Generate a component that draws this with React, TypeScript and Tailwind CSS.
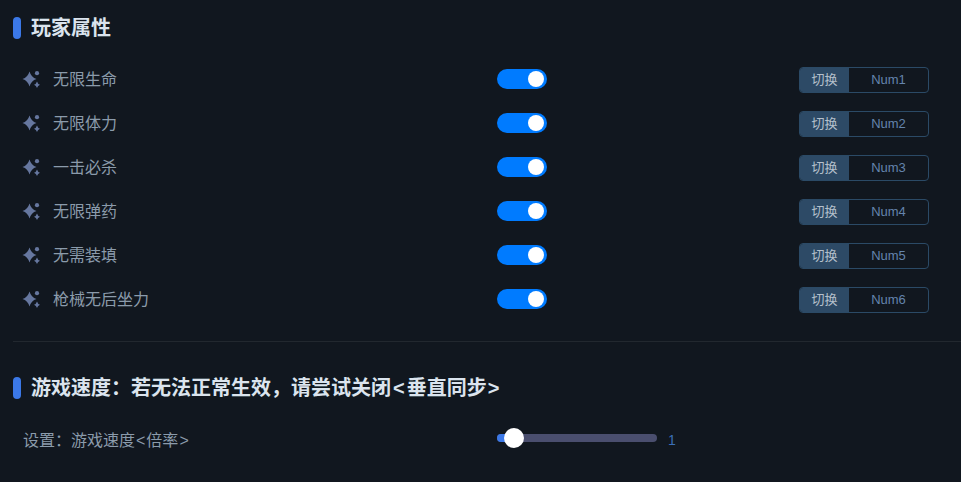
import React from 'react';

const rows = [
  { name: '无限生命', key: 'Num1' },
  { name: '无限体力', key: 'Num2' },
  { name: '一击必杀', key: 'Num3' },
  { name: '无限弹药', key: 'Num4' },
  { name: '无需装填', key: 'Num5' },
  { name: '枪械无后坐力', key: 'Num6' },
];

const Sparkle = () => (
  <svg width="18" height="18" viewBox="0 0 18 18" className="shrink-0" fill="#66779f">
    <path d="M7.5 1.5 Q9.2 7.3 14.5 9 Q9.2 10.7 7.5 16.5 Q5.8 10.7 0.5 9 Q5.8 7.3 7.5 1.5 Z" />
    <circle cx="15" cy="3.2" r="2.1" />
    <path d="M15 11.5 Q15.7 14 18 14.7 Q15.7 15.4 15 18 Q14.3 15.4 12 14.7 Q14.3 14 15 11.5 Z" />
  </svg>
);

const Heading = ({ children }: { children: React.ReactNode }) => (
  <div className="flex items-center h-[22px] pl-[13px]">
    <span className="w-2 h-[22px] rounded bg-[#3b78e7]" />
    <h2 className="ml-[10px] text-[20px] leading-[22px] font-bold text-[#dbe4ee]">{children}</h2>
  </div>
);

const Row = ({ name, hotkey }: { name: string; hotkey: string }) => (
  <div className="flex items-center h-11">
    <div className="w-[497px] flex items-center pl-[22px]">
      <Sparkle />
      <span className="ml-[13px] mt-[2px] text-base text-[#8b9bab]">{name}</span>
    </div>
    <div className="w-[50px] h-5 rounded-full bg-[#007bff] flex items-center justify-end pr-[3px]">
      <span className="w-4 h-4 rounded-full bg-white" />
    </div>
    <div className="ml-[252px] mt-px w-[130px] h-[26px] flex rounded border border-[#2b4a66] overflow-hidden text-[13px]">
      <span className="w-[49px] bg-[#2d4a66] text-[#b5c0cc] flex items-center justify-center">切换</span>
      <span className="flex-1 text-[#6484ad] flex items-center justify-center">{hotkey}</span>
    </div>
  </div>
);

export default function App() {
  return (
    <div
      className="w-[961px] h-[482px] overflow-hidden bg-[#11171f] pt-[17px]"
      style={{ fontFamily: '"Liberation Sans", "Noto Sans CJK SC", sans-serif' }}
    >
      <Heading>玩家属性</Heading>
      <div className="mt-[18px]">
        {rows.map((r) => (
          <Row key={r.key} name={r.name} hotkey={r.key} />
        ))}
      </div>
      <div className="ml-[13px] mt-[20px] h-px bg-[#22282f]" />
      <div className="mt-[35px]">
        <Heading>
          游戏速度：若无法正常生效，请尝试关闭<span className="mx-[2px]">&lt;</span>垂直同步<span className="ml-px">&gt;</span>
        </Heading>
      </div>
      <div className="mt-[26px] flex items-center h-[26px]">
        <span className="w-[497px] pl-[23px] mt-[5px] text-base text-[#8b9bab]">
          设置：游戏速度<span className="mx-[1px]">&lt;</span>倍率<span className="mx-[1px]">&gt;</span>
        </span>
        <div className="relative w-[160px] h-2 rounded-full bg-[#4a4e6e]">
          <div className="w-[16px] h-2 rounded-l-full bg-[#3b78e7]" />
          <span className="absolute left-[7px] top-[-6px] w-5 h-5 rounded-full bg-white" />
        </div>
        <span className="ml-[11px] mt-[4px] text-sm text-[#3b6fb8]">1</span>
      </div>
    </div>
  );
}
